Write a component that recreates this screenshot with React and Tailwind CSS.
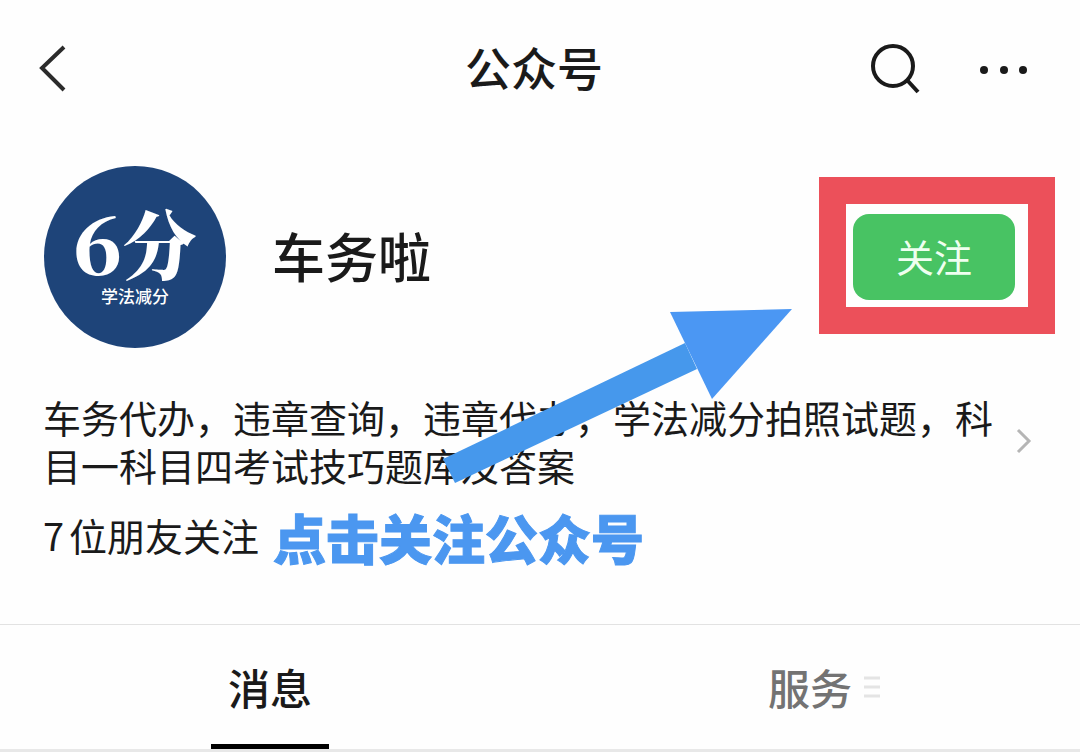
import React, { useState } from "react";

const tabs = [
  { id: "messages", label: "消息" },
  { id: "services", label: "服务", hasMenu: true },
];

const Header = () => (
  <header className="grid grid-cols-[1fr_auto_1fr] items-center h-[136px] pl-9 pr-12 text-[#1a1a1a]">
    <button type="button" aria-label="返回" className="justify-self-start">
      <svg width="34" height="50" viewBox="0 0 34 50" fill="none">
        <path
          d="M28 4 L6 25 L28 47"
          stroke="#2b2b2b"
          strokeWidth="4"
        />
      </svg>
    </button>
    <h1 className="pb-1 text-[46px] leading-[60px] font-medium">公众号</h1>
    <div className="flex items-center justify-self-end gap-14">
      <button type="button" aria-label="搜索">
        <svg width="54" height="54" viewBox="0 0 54 54" fill="none">
          <circle cx="23" cy="25" r="20" stroke="currentColor" strokeWidth="4" />
          <path d="M37 39 L48 51" stroke="currentColor" strokeWidth="4" />
        </svg>
      </button>
      <button type="button" aria-label="更多">
        <svg width="52" height="20" viewBox="0 0 52 20" fill="currentColor">
          <circle cx="4" cy="12" r="4" />
          <circle cx="24" cy="12" r="4" />
          <circle cx="43" cy="12" r="4" />
        </svg>
      </button>
    </div>
  </header>
);

const Avatar = () => (
  <div className="flex flex-col items-center shrink-0 size-[182px] rounded-full bg-[#1e4479] text-white pt-8">
    <div className="flex items-center h-[86px] font-['Noto_Serif_CJK_SC','Noto_Sans_CJK_SC',serif] font-black">
      <span className="text-[80px] leading-[80px]">6</span>
      <span className="text-[74px] leading-[74px]">分</span>
    </div>
    <span className="text-[17px] leading-6 font-medium">学法减分</span>
  </div>
);

const Arrow = () => (
  <svg
    className="absolute right-[288px] top-[172px] pointer-events-none"
    width="350"
    height="176"
    viewBox="0 0 350 176"
    aria-hidden="true"
  >
    <path d="M1 151 L243 35 L255 61 L13 175 Z" fill="#4698ec" />
    <path d="M228 4 L350 1 L270 91 Z" fill="#4b97f3" />
  </svg>
);

const Profile = () => (
  <section className="relative h-[488px] pt-[30px]">
    <div className="flex items-start pl-11 pr-[25px]">
      <Avatar />
      <h2 className="flex-1 ml-[46px] text-[53px] leading-[178px] font-medium text-[#1a1a1a]">
        车务啦
      </h2>
      <div className="mt-[11px] border-[27px] border-[#ec505a] pt-[10px] pb-[7px] pl-[7px] pr-[13px]">
        <button
          type="button"
          className="block w-[162px] h-[86px] pb-1 rounded-2xl bg-[#48c363] text-[38px] text-[#effff0]"
        >
          关注
        </button>
      </div>
    </div>

    <a
      href="#details"
      className="flex items-center justify-between mt-[45px] pl-[43px] pr-12 text-[#1a1a1a]"
    >
      <p className="w-[960px] text-[38px] leading-[48px]">
        车务代办，违章查询，违章代办，学法减分拍照试题，科目一科目四考试技巧题库及答案
      </p>
      <svg className="shrink-0" width="16" height="26" viewBox="0 0 16 26" fill="none">
        <path d="M2 2 L13 13 L2 24" stroke="#b5b5b5" strokeWidth="3" />
      </svg>
    </a>

    <div className="flex items-start mt-3 pl-[43px]">
      <p className="text-[38px] leading-[68px] text-[#1a1a1a]">
        <span className="mr-[5px]">7</span>位朋友关注
      </p>
      <strong className="ml-[14px] text-[53px] leading-[72px] font-black text-[#4b97f0] [-webkit-text-stroke:1px_#4b97f0]">
        点击关注公众号
      </strong>
    </div>

    <Arrow />
  </section>
);

const Tabs = () => {
  const [active, setActive] = useState("messages");

  return (
    <nav className="grid grid-cols-2 border-t border-t-[#e2e2e2] border-b-[3px] border-b-[#e8e8e8]">
      {tabs.map((tab) => (
        <button
          key={tab.id}
          type="button"
          onClick={() => setActive(tab.id)}
          className={`flex flex-col items-center h-[124px] text-[42px] font-medium ${
            active === tab.id ? "text-[#1a1a1a]" : "text-[#737373]"
          }`}
        >
          <span className="relative flex flex-1 items-center pt-1">
            {tab.label}
            {tab.hasMenu && (
              <svg
                className="absolute left-full ml-3"
                width="16"
                height="22"
                viewBox="0 0 16 22"
                aria-hidden="true"
              >
                <path
                  d="M0 2 H16 M0 11 H16 M0 20 H16"
                  stroke="#e4e4e4"
                  strokeWidth="3"
                />
              </svg>
            )}
          </span>
          <span
            className={`w-[118px] h-[5px] ${
              active === tab.id ? "bg-black" : "bg-transparent"
            }`}
          />
        </button>
      ))}
    </nav>
  );
};

const App = () => {
  return (
    <main className="bg-[#fefefe] font-['Noto_Sans_CJK_SC',sans-serif]">
      <Header />
      <Profile />
      <Tabs />
    </main>
  );
};

export default App;
